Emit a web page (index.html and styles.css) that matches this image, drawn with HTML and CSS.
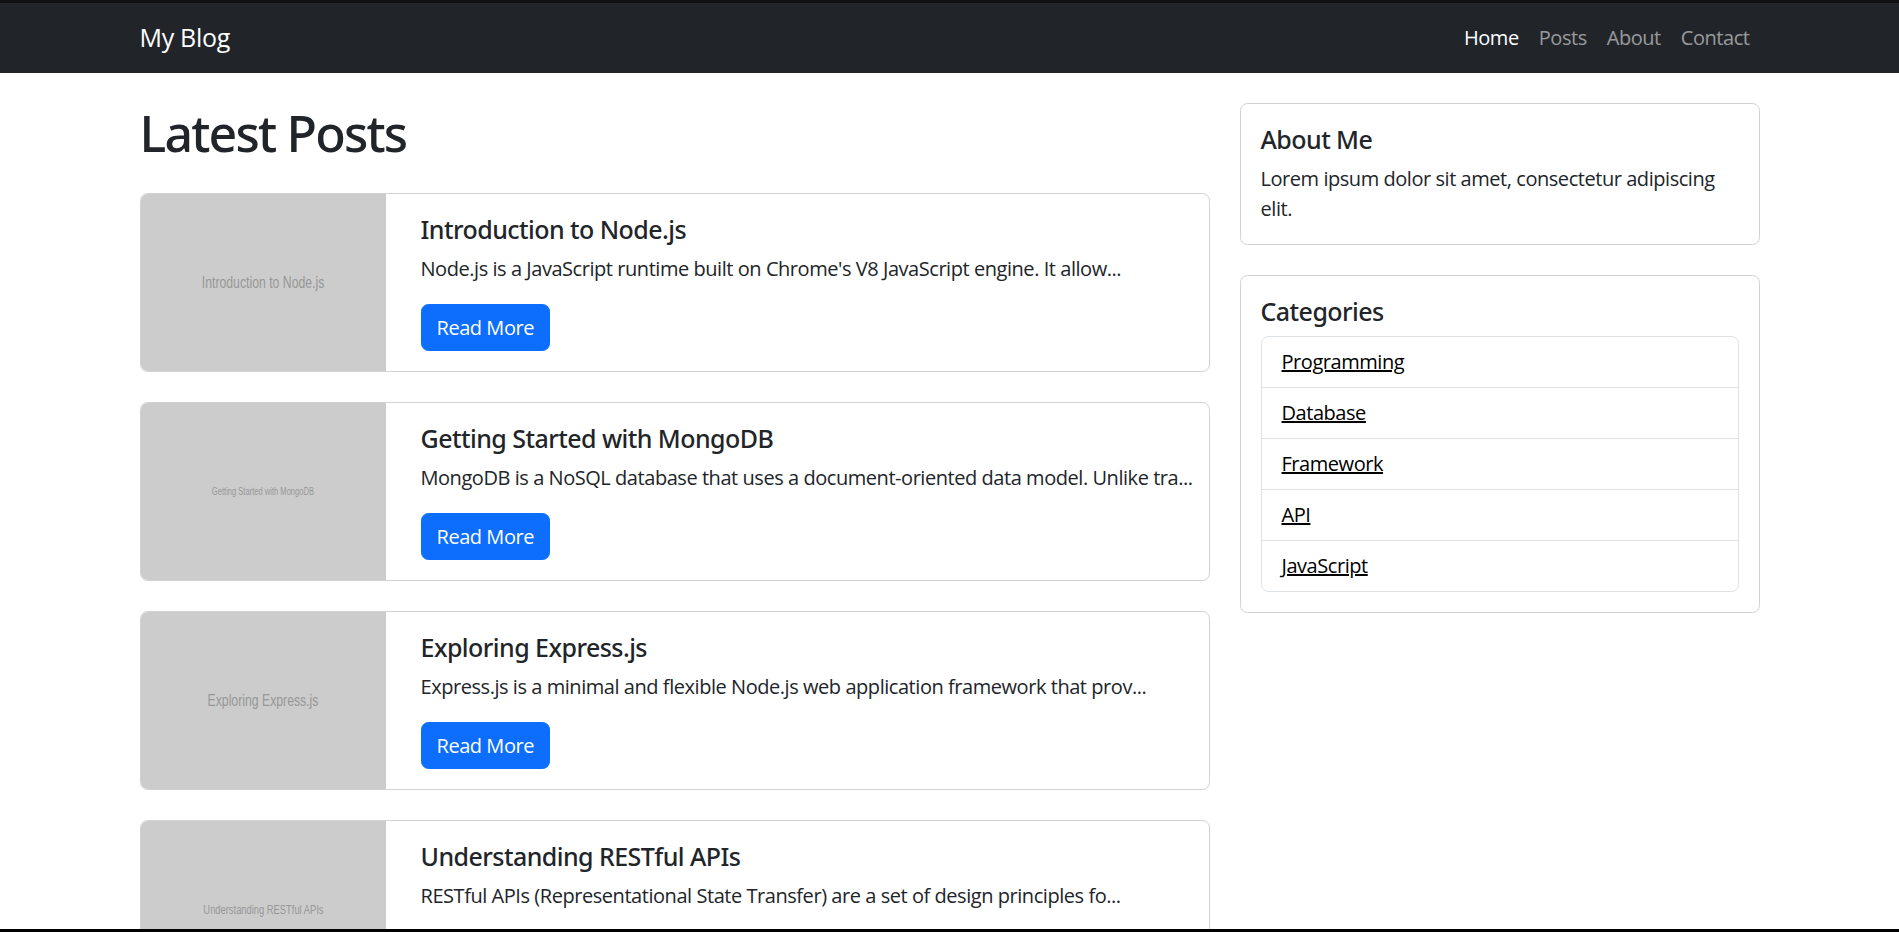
FILE: index.html
```html
<!DOCTYPE html>
<html lang="en">
<head>
<meta charset="utf-8">
<title>My Blog</title>
<link rel="stylesheet" href="styles.css">
</head>
<body>
<div class="topstrip"></div>
<nav class="navbar">
  <div class="container nav-inner">
    <a class="brand" href="#">My Blog</a>
    <ul class="nav-links">
      <li><a class="nav-link active" href="#">Home</a></li>
      <li><a class="nav-link" href="#">Posts</a></li>
      <li><a class="nav-link" href="#">About</a></li>
      <li><a class="nav-link" href="#">Contact</a></li>
    </ul>
  </div>
</nav>

<div class="container main">
  <div class="row">
    <div class="col-main">
      <h1 class="page-title">Latest Posts</h1>

      <div class="post-card">
        <div class="thumb"><span class="thumb-text t17">Introduction to Node.js</span></div>
        <div class="post-body">
          <h5 class="post-title">Introduction to Node.js</h5>
          <p class="post-text">Node.js is a JavaScript runtime built on Chrome's V8 JavaScript engine. It allow...</p>
          <a class="btn" href="#">Read More</a>
        </div>
      </div>

      <div class="post-card">
        <div class="thumb"><span class="thumb-text t10">Getting Started with MongoDB</span></div>
        <div class="post-body">
          <h5 class="post-title">Getting Started with MongoDB</h5>
          <p class="post-text">MongoDB is a NoSQL database that uses a document-oriented data model. Unlike tra...</p>
          <a class="btn" href="#">Read More</a>
        </div>
      </div>

      <div class="post-card">
        <div class="thumb"><span class="thumb-text t17">Exploring Express.js</span></div>
        <div class="post-body">
          <h5 class="post-title">Exploring Express.js</h5>
          <p class="post-text">Express.js is a minimal and flexible Node.js web application framework that prov...</p>
          <a class="btn" href="#">Read More</a>
        </div>
      </div>

      <div class="post-card">
        <div class="thumb"><span class="thumb-text t13">Understanding RESTful APIs</span></div>
        <div class="post-body">
          <h5 class="post-title">Understanding RESTful APIs</h5>
          <p class="post-text">RESTful APIs (Representational State Transfer) are a set of design principles fo...</p>
          <a class="btn" href="#">Read More</a>
        </div>
      </div>
    </div>

    <aside class="col-side">
      <div class="side-card">
        <h5 class="side-title">About Me</h5>
        <p class="side-text">Lorem ipsum dolor sit amet, consectetur adipiscing elit.</p>
      </div>
      <div class="side-card">
        <h5 class="side-title">Categories</h5>
        <ul class="cat-list">
          <li><a href="#">Programming</a></li>
          <li><a href="#">Database</a></li>
          <li><a href="#">Framework</a></li>
          <li><a href="#">API</a></li>
          <li><a href="#">JavaScript</a></li>
        </ul>
      </div>
    </aside>
  </div>
</div>
<div class="bottombar"></div>
</body>
</html>
```

FILE: styles.css
```css
* { box-sizing: border-box; }

body {
  margin: 0;
  font-family: "Open Sans", "Noto Sans", sans-serif;
  font-size: 20px;
  line-height: 1.5;
  letter-spacing: -0.45px;
  color: #212529;
  background: #fff;
}

.topstrip {
  height: 3px;
  background: #101112;
}

.container {
  max-width: 1650px;
  margin: 0 auto;
  padding: 0 15px;
}

.navbar {
  background: #212529;
  padding: 10px 0;
}

.nav-inner {
  display: flex;
  align-items: center;
  justify-content: space-between;
}

.brand {
  color: #fff;
  text-decoration: none;
  font-size: 25px;
  line-height: 37.5px;
  padding: 6.25px 0;
  letter-spacing: -0.3px;
}

.nav-links {
  list-style: none;
  margin: 0;
  padding: 0;
  display: flex;
}

.nav-link {
  display: block;
  padding: 10px;
  line-height: 30px;
  color: rgba(255, 255, 255, 0.55);
  text-decoration: none;
}

.nav-link.active { color: #fff; }

.main { margin-top: 30px; }

.row {
  display: flex;
  gap: 30px;
}

.col-main { flex: 0 0 1070px; min-width: 0; }
.col-side { flex: 0 0 520px; min-width: 0; }

.page-title {
  font-family: "Noto Sans", "Open Sans", sans-serif;
  font-size: 50px;
  font-weight: 500;
  line-height: 1.2;
  letter-spacing: -1.8px;
  margin: 0 0 30px;
}

.post-card {
  display: flex;
  border: 1px solid #d2d2d2;
  border-radius: 7.5px;
  margin-bottom: 30px;
  overflow: hidden;
}

.thumb {
  flex: 0 0 245px;
  background: #cccccc;
  display: flex;
  align-items: center;
  justify-content: center;
  overflow: hidden;
}

.thumb-text {
  display: inline-block;
  font-family: "Liberation Sans", Arial, sans-serif;
  letter-spacing: 0;
  color: #979797;
  white-space: nowrap;
  transform: scaleX(0.72);
}

.t17 { font-size: 17px; }
.t13 { font-size: 13px; }
.t10 { font-size: 10.5px; }

.post-body {
  flex: 1;
  min-width: 0;
  padding: 20px 20px 20px 35px;
}

.post-title,
.side-title {
  font-family: "Noto Sans", "Open Sans", sans-serif;
  font-size: 25px;
  font-weight: 500;
  line-height: 1.2;
  letter-spacing: -0.55px;
  margin: 0 0 10px;
}

.post-text {
  margin: 0 0 20px;
  white-space: nowrap;
}

.btn {
  display: inline-block;
  background: #0d6efd;
  border: 1px solid #0d6efd;
  color: #fff;
  padding: 7.5px 15px;
  border-radius: 7.5px;
  line-height: 30px;
  text-decoration: none;
}

.side-card {
  border: 1px solid #d2d2d2;
  border-radius: 7.5px;
  padding: 20px;
  margin-bottom: 30px;
}

.side-text { margin: 0; }

.cat-list {
  list-style: none;
  margin: 0;
  padding: 0;
  border: 1px solid #dee2e6;
  border-radius: 7.5px;
}

.cat-list li {
  padding: 10px 20px;
  border-bottom: 1px solid #dee2e6;
}

.cat-list li:last-child { border-bottom: 0; }

.cat-list a {
  color: #000;
  text-decoration: underline;
}

.bottombar {
  position: fixed;
  left: 0;
  right: 0;
  bottom: 0;
  height: 3px;
  background: #000;
}
```
